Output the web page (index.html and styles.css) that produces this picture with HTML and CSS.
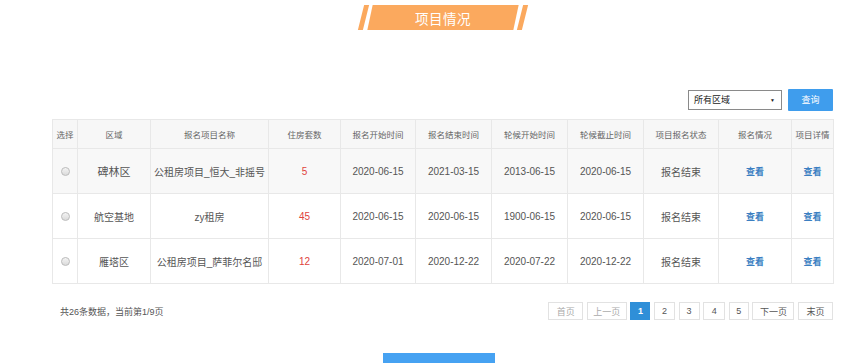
FILE: index.html
```html
<!DOCTYPE html>
<html lang="zh-CN">
<head>
<meta charset="utf-8">
<title>项目情况</title>
<link rel="stylesheet" href="styles.css">
</head>
<body>
<div class="page">
  <div class="banner">
    <span class="stripe"></span>
    <span class="banner-body"><span class="banner-text">项目情况</span></span>
    <span class="stripe"></span>
  </div>

  <div class="toolbar">
    <div class="select">所有区域<span class="caret">▼</span></div>
    <button class="btn-query">查询</button>
  </div>

  <table class="grid">
    <colgroup>
      <col style="width:25px"><col style="width:73px"><col style="width:118px"><col style="width:72px">
      <col style="width:75px"><col style="width:76px"><col style="width:76px"><col style="width:76px">
      <col style="width:75px"><col style="width:73px"><col style="width:42px">
    </colgroup>
    <thead>
      <tr>
        <th>选择</th><th>区域</th><th>报名项目名称</th><th>住房套数</th><th>报名开始时间</th><th>报名结束时间</th>
        <th>轮候开始时间</th><th>轮候截止时间</th><th>项目报名状态</th><th>报名情况</th><th>项目详情</th>
      </tr>
    </thead>
    <tbody>
      <tr class="shade">
        <td><span class="radio"></span></td><td class="big">碑林区</td><td>公租房项目_恒大_非摇号</td><td class="num">5</td>
        <td>2020-06-15</td><td>2021-03-15</td><td>2013-06-15</td><td>2020-06-15</td><td>报名结束</td>
        <td class="link">查看</td><td class="link">查看</td>
      </tr>
      <tr>
        <td><span class="radio"></span></td><td>航空基地</td><td>zy租房</td><td class="num">45</td>
        <td>2020-06-15</td><td>2020-06-15</td><td>1900-06-15</td><td>2020-06-15</td><td>报名结束</td>
        <td class="link">查看</td><td class="link">查看</td>
      </tr>
      <tr>
        <td><span class="radio"></span></td><td>雁塔区</td><td>公租房项目_萨菲尔名邸</td><td class="num">12</td>
        <td>2020-07-01</td><td>2020-12-22</td><td>2020-07-22</td><td>2020-12-22</td><td>报名结束</td>
        <td class="link">查看</td><td class="link">查看</td>
      </tr>
    </tbody>
  </table>

  <div class="footer">
    <div class="summary">共26条数据，当前第1/9页</div>
    <div class="pager">
      <span class="pg dis w35">首页</span>
      <span class="pg dis w40">上一页</span>
      <span class="pg active w20">1</span>
      <span class="pg w21">2</span>
      <span class="pg w21">3</span>
      <span class="pg w22">4</span>
      <span class="pg w20">5</span>
      <span class="pg w42">下一页</span>
      <span class="pg w35">末页</span>
    </div>
  </div>

  <div class="bottom">
    <button class="btn-main">返回</button>
  </div>
</div>
</body>
</html>
```

FILE: styles.css
```css
html, body {
  margin: 0;
  padding: 0;
  background: #fff;
  overflow: hidden;
}
body {
  font-family: "Liberation Sans", "Noto Sans CJK SC", sans-serif;
  color: #333;
  height: 363px;
}
.page {
  width: 781px;
  margin-left: 52px;
}
.banner {
  display: flex;
  justify-content: center;
  align-items: stretch;
  gap: 4px;
  height: 25px;
  margin-top: 5px;
}
.stripe {
  width: 5px;
  background: #fba95e;
  transform: skewX(-14deg);
}
.banner-body {
  width: 146px;
  background: #fba95e;
  transform: skewX(-12deg);
  display: flex;
  align-items: center;
  justify-content: center;
}
.banner-text {
  transform: skewX(12deg);
  color: #fff;
  font-size: 13.5px;
  letter-spacing: 0.5px;
}
.toolbar {
  display: flex;
  justify-content: flex-end;
  align-items: center;
  gap: 6px;
  margin-top: 58px;
  height: 23px;
}
.select {
  box-sizing: border-box;
  width: 94px;
  height: 20px;
  border: 1px solid #8a8a8a;
  display: flex;
  align-items: center;
  justify-content: space-between;
  padding: 0 6px 0 5px;
  font-size: 9px;
  color: #222;
  background: #fff;
}
.caret {
  font-size: 5px;
  color: #222;
}
.btn-query {
  width: 45px;
  height: 22px;
  border: 0;
  border-radius: 1px;
  background: #3f9ded;
  color: #fff;
  font-size: 9px;
  font-family: inherit;
  padding: 0;
}
.grid {
  margin-top: 8px;
  width: 782px;
  border-collapse: collapse;
  table-layout: fixed;
}
.grid th, .grid td {
  border: 1px solid #e8e8e8;
  text-align: center;
  padding: 0;
  white-space: nowrap;
  overflow: hidden;
}
.grid th {
  height: 28px;
  font-size: 8.5px;
  font-weight: normal;
  color: #666;
  background: #f7f7f7;
}
.grid td {
  height: 44px;
  font-size: 10px;
  color: #555;
}
.grid td.big {
  font-size: 11px;
}
.grid tr.shade td {
  background: #f8f8f8;
}
.grid td.num {
  color: #e0433c;
}
.grid td.link {
  color: #3b7fc2;
  font-size: 9px;
  font-weight: bold;
}
.radio {
  display: inline-block;
  width: 7px;
  height: 7px;
  border-radius: 50%;
  border: 1px solid #bdbdbd;
  background: linear-gradient(#f4f4f4, #dadada);
  vertical-align: middle;
}
.footer {
  display: flex;
  justify-content: space-between;
  align-items: center;
  margin-top: 18px;
}
.summary {
  padding-left: 8px;
  font-size: 9px;
  color: #555;
}
.pager {
  display: flex;
  gap: 3.6px;
}
.pg {
  box-sizing: border-box;
  height: 18px;
  border: 1px solid #e2e2e2;
  display: flex;
  align-items: center;
  justify-content: center;
  font-size: 9px;
  color: #555;
  background: #fff;
}
.pg.dis { color: #aaa; }
.pg.active {
  background: #2f8fd8;
  border-color: #2f8fd8;
  color: #fff;
  font-weight: bold;
}
.w20 { width: 20px; }
.w21 { width: 21px; }
.w22 { width: 22px; }
.w35 { width: 35px; }
.w40 { width: 40px; }
.w42 { width: 42px; }
.bottom {
  display: flex;
  justify-content: center;
  margin-top: 33px;
  padding-right: 8px;
}
.btn-main {
  width: 112px;
  height: 30px;
  border: 0;
  background: #46a2f2;
  color: #fff;
  font-size: 12px;
  font-family: inherit;
  padding: 0;
}
```
